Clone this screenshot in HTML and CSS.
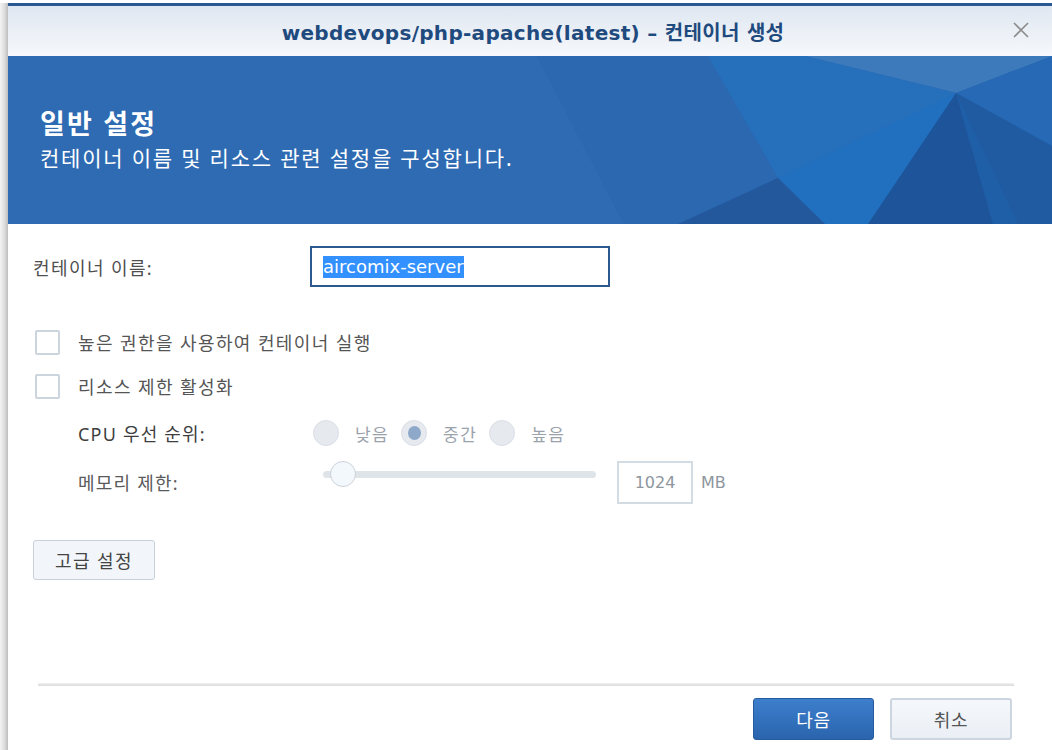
FILE: index.html
```html
<!DOCTYPE html>
<html lang="ko">
<head>
<meta charset="utf-8">
<link rel="stylesheet" href="styles.css">
</head>
<body>
<div class="screen">
  <div class="backdrop-edge"></div>
  <div class="dialog">
    <div class="header">
      <div class="title">webdevops/php-apache(latest) – 컨테이너 생성</div>
      <div class="close" aria-label="close">
        <svg width="18" height="18" viewBox="0 0 18 18"><path d="M2 2 L16 16 M16 2 L2 16" stroke="#8c8c8c" stroke-width="1.6" fill="none"/></svg>
      </div>
    </div>
    <div class="banner">
      <svg class="banner-art" width="1044" height="168" viewBox="0 0 1044 168" preserveAspectRatio="none">
        <polygon points="529,0 1044,0 1044,168 616,168" fill="#2c69b2"/>
        <polygon points="797,0 948,37 1044,0" fill="#4a86c2" opacity="0.6"/>
        <polygon points="948,37 1044,0 1044,90" fill="#2769b4"/>
        <polygon points="529,0 797,0 948,37 770,122 670,168 616,168" fill="#2b68b0"/>
        <polygon points="700,0 797,0 948,37 770,122" fill="#2670bd" opacity="0.9"/>
        <polygon points="948,37 770,122 817,168 985,168" fill="#2170bf"/>
        <polygon points="770,122 670,168 817,168" fill="#23589d"/>
        <polygon points="948,37 985,168 1044,168 1044,90" fill="#1f5fa8"/>
        <polygon points="948,37 860,168 985,168" fill="#1c4f93" opacity="0.85"/>
        <polygon points="948,37 1044,90 1044,168 1010,168" fill="#215aa0" opacity="0.7"/>
      </svg>
      <div class="banner-text">
        <div class="banner-title">일반 설정</div>
        <div class="banner-sub">컨테이너 이름 및 리소스 관련 설정을 구성합니다.</div>
      </div>
    </div>
    <div class="content">
      <div class="row name-row">
        <label class="label">컨테이너 이름:</label>
        <div class="text-input"><span class="selected">aircomix-server</span></div>
      </div>
      <div class="check-row first">
        <span class="checkbox"></span>
        <span class="check-label">높은 권한을 사용하여 컨테이너 실행</span>
      </div>
      <div class="check-row">
        <span class="checkbox"></span>
        <span class="check-label">리소스 제한 활성화</span>
      </div>
      <div class="sub-row cpu-row">
        <span class="sub-label dark">CPU 우선 순위:</span>
        <div class="radios">
          <span class="radio"></span><span class="radio-label">낮음</span>
          <span class="radio checked"></span><span class="radio-label">중간</span>
          <span class="radio"></span><span class="radio-label">높음</span>
        </div>
      </div>
      <div class="sub-row mem-row">
        <span class="sub-label">메모리 제한:</span>
        <div class="slider"><span class="thumb"></span></div>
        <div class="num-input">1024</div>
        <span class="unit">MB</span>
      </div>
      <button class="btn adv">고급 설정</button>
    </div>
    <div class="footer">
      <div class="footer-line"></div>
      <div class="footer-buttons">
        <button class="btn primary">다음</button>
        <button class="btn cancel">취소</button>
      </div>
    </div>
  </div>
</div>
</body>
</html>
```

FILE: styles.css
```css
* { box-sizing: border-box; }
html, body { margin: 0; padding: 0; }
body {
  width: 1052px;
  height: 750px;
  overflow: hidden;
  background: #ffffff;
  font-family: "Noto Sans", "Noto Sans CJK KR", sans-serif;
}
.screen {
  display: flex;
  height: 750px;
}
.backdrop-edge {
  width: 8px;
  flex: none;
  margin-top: 3px;
  background: linear-gradient(to right, #f4f4f4 0%, #dedede 55%, #bdbdbd 100%);
}
.dialog {
  flex: 1;
  margin-top: 3px;
  border-top: 3px solid #2b5891;
  display: flex;
  flex-direction: column;
  background: #fff;
}
.header {
  position: relative;
  height: 50px;
  flex: none;
  background: linear-gradient(to bottom, #dfe7f1, #f6f8fb);
  display: flex;
  align-items: center;
  justify-content: center;
}
.title {
  font-family: "DejaVu Sans", "Noto Sans CJK KR", sans-serif;
  font-weight: 700;
  font-size: 20px;
  color: #1f4a7e;
  letter-spacing: 0.3px;
  padding-left: 6px;
}
.close {
  position: absolute;
  right: 22px;
  top: 15px;
  width: 18px;
  height: 18px;
}
.close svg { display: block; }
.banner {
  position: relative;
  height: 168px;
  flex: none;
  background: #2e6bb3;
  overflow: hidden;
}
.banner-art {
  position: absolute;
  left: 0;
  top: 0;
}
.banner-text {
  position: relative;
  padding: 50px 0 0 32px;
  color: #fff;
}
.banner-title {
  font-size: 27px;
  font-weight: 700;
  line-height: 36px;
  letter-spacing: 2.2px;
}
.banner-sub {
  font-size: 21px;
  line-height: 32px;
  letter-spacing: 1.8px;
}
.content {
  flex: 1;
  padding: 22px 0 0 25px;
  display: flex;
  flex-direction: column;
  align-items: flex-start;
}
.row { display: flex; align-items: center; }
.label {
  width: 277px;
  font-size: 18px;
  letter-spacing: 1.4px;
  color: #4f4f4f;
}
.text-input {
  width: 300px;
  height: 41px;
  border: 2px solid #2c5a8e;
  display: flex;
  align-items: center;
  padding-left: 11px;
}
.selected {
  background: #3390ff;
  color: #fff;
  font-size: 18px;
  line-height: 22px;
  font-family: "DejaVu Sans", "Noto Sans", sans-serif;
  letter-spacing: 0;
}
.check-row {
  display: flex;
  align-items: center;
  height: 44px;
  padding-left: 2px;
}
.check-row.first { margin-top: 33px; }
.checkbox {
  width: 25px;
  height: 25px;
  border: 2px solid #ccd4de;
  border-radius: 2px;
  background: #fff;
  flex: none;
}
.check-label {
  margin-left: 18px;
  font-size: 18px;
  letter-spacing: 1.4px;
  color: #555;
}
.sub-row {
  display: flex;
  align-items: center;
  padding-left: 45px;
}
.cpu-row { height: 50px; }
.mem-row { height: 48px; }
.sub-label {
  width: 235px;
  font-size: 18px;
  letter-spacing: 1.2px;
  color: #5a5a5a;
}
.sub-label.dark { color: #3e3e3e; }
.radios {
  display: flex;
  align-items: center;
}
.radio {
  width: 26px;
  height: 26px;
  border-radius: 50%;
  background: #e6eaef;
  border: 1px solid #d9dfe6;
  display: flex;
  align-items: center;
  justify-content: center;
  flex: none;
}
.radio.checked::after {
  content: "";
  width: 13px;
  height: 14px;
  border-radius: 50%;
  background: #8ea8c9;
}
.radio-label {
  margin: 0 12px 0 16px;
  font-size: 17px;
  letter-spacing: 1.4px;
  color: #9aa2ab;
}
.slider {
  position: relative;
  width: 273px;
  height: 7px;
  margin-left: 10px;
  border-radius: 4px;
  background: #dfe4e8;
  margin-top: -16px;
}
.thumb {
  position: absolute;
  left: 7px;
  top: -10px;
  width: 26px;
  height: 26px;
  border-radius: 50%;
  background: #f3f8fd;
  border: 1px solid #ccd2d9;
}
.num-input {
  width: 76px;
  height: 43px;
  margin-left: 21px;
  border: 2px solid #d3dbe3;
  display: flex;
  align-items: center;
  justify-content: center;
  font-family: "DejaVu Sans", sans-serif;
  font-size: 16px;
  color: #8e969e;
  background: #fff;
}
.unit {
  margin-left: 8px;
  font-family: "DejaVu Sans", sans-serif;
  font-size: 16px;
  color: #8e969e;
}
.btn {
  font-family: "Noto Sans", "Noto Sans CJK KR", sans-serif;
  font-size: 18px;
  letter-spacing: 1.4px;
  border-radius: 3px;
  cursor: default;
}
.adv {
  margin-top: 34px;
  width: 122px;
  height: 40px;
  background: #f2f6fa;
  border: 1px solid #c7d1dc;
  color: #444;
}
.footer {
  flex: none;
  height: 67px;
  padding: 0 40px 0 30px;
  display: flex;
  flex-direction: column;
}
.footer-line {
  height: 3px;
  margin-right: -2px;
  background: linear-gradient(to bottom, #f1f1f1, #dadada);
}
.footer-buttons {
  display: flex;
  justify-content: flex-end;
  gap: 16px;
  padding-top: 12px;
}
.primary {
  width: 121px;
  height: 42px;
  background: linear-gradient(to bottom, #3d7fcd, #2a64ad);
  border: 1px solid #265c9d;
  color: #fff;
  letter-spacing: 0.6px;
}
.cancel {
  width: 122px;
  height: 42px;
  background: linear-gradient(to bottom, #f5f8fb, #eaeff5);
  border: 2px solid #cdd6e0;
  color: #555;
  letter-spacing: 0.6px;
}
```
